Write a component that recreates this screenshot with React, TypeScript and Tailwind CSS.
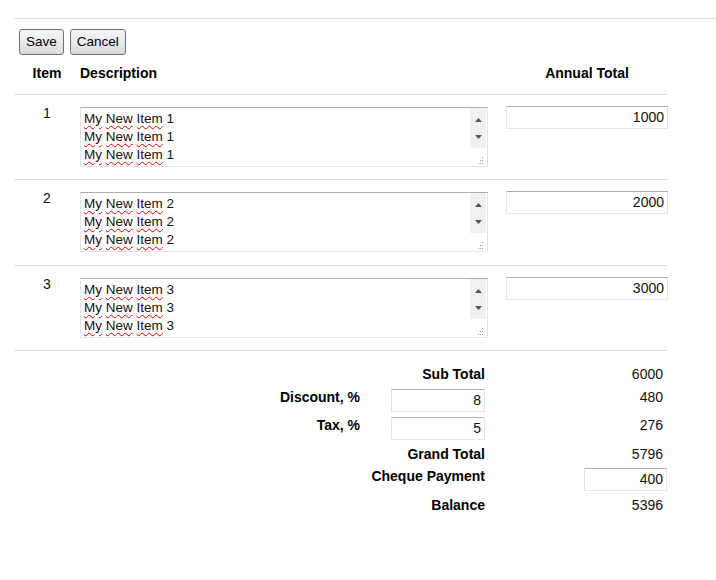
import React from 'react'

const items = [
    { id: 1, total: '1000', pb: 'pb-[12px]' },
    { id: 2, total: '2000', pb: 'pb-[13px]' },
    { id: 3, total: '3000', pb: 'pb-[12px]' },
]

const ieBorder = 'border border-[#e2e3ea] border-t-[#abadb3] border-b-[#e3e9ef]'

function Word({ children }: { children: React.ReactNode }) {
    return (
        <span className="underline decoration-wavy decoration-[#e00000] decoration-1 underline-offset-[2px]">{children}</span>
    )
}

function FakeTextarea({ n }: { n: number }) {
    return (
        <div className={`relative h-[60px] w-[408px] bg-white pl-[3px] pt-[2px] text-[13.5px] leading-[18px] text-[#111] ${ieBorder}`}>
            {[0, 1, 2].map((i) => (
                <div key={i}>
                    <Word>My</Word> <Word>New</Word> <Word>Item</Word> {n}
                </div>
            ))}
            <div className="absolute right-[1px] top-0 flex h-[40px] w-[16px] flex-col items-center justify-around bg-[#f0f0f0] py-[3px]">
                <svg width="7" height="4" viewBox="0 0 7 4">
                    <path d="M0 4 L3.5 0 L7 4 Z" fill="#555" />
                </svg>
                <svg width="7" height="4" viewBox="0 0 7 4">
                    <path d="M0 0 L7 0 L3.5 4 Z" fill="#555" />
                </svg>
            </div>
            <svg className="absolute bottom-[2px] right-[3px]" width="6" height="7" viewBox="0 0 6 7">
                <rect x="4" y="0" width="1" height="1" fill="#999" />
                <rect x="2" y="3" width="1" height="1" fill="#999" />
                <rect x="4" y="3" width="1" height="1" fill="#999" />
                <rect x="0" y="6" width="1" height="1" fill="#999" />
                <rect x="2" y="6" width="1" height="1" fill="#999" />
                <rect x="4" y="6" width="1" height="1" fill="#999" />
            </svg>
        </div>
    )
}

function NumBox({ value, width }: { value: string; width: string }) {
    return (
        <div className={`h-[23px] ${width} bg-white pr-[3px] text-right text-[14px] leading-[21px] text-[#111] ${ieBorder}`}>
            {value}
        </div>
    )
}

function Button({ children }: { children: React.ReactNode }) {
    return (
        <button className="h-[26px] rounded-[3px] border border-[#707070] bg-gradient-to-b from-[#f4f4f4] via-[#ebebeb] to-[#d9d9d9] px-[6px] text-[13.5px] leading-[24px] text-black">
            {children}
        </button>
    )
}

export default function App() {
    return (
        <div className="min-h-screen bg-white pl-[14px] pt-[18px] text-[14px] text-[#111]" style={{ fontFamily: '"Liberation Sans", Arial, sans-serif' }}>
            <div className="border-t border-[#e0e0e0]" />
            <div className="flex gap-[6px] pl-[5px] pt-[10px]">
                <Button>Save</Button>
                <Button>Cancel</Button>
            </div>

            <div className="w-[654px]">
                <div className="flex pb-[13px] pt-[10px] text-[14px] font-bold leading-[16px] text-black">
                    <div className="w-[66px] text-center">Item</div>
                    <div className="w-[426px]">Description</div>
                    <div className="w-[162px] text-center">Annual Total</div>
                </div>

                {items.map((it) => (
                    <div key={it.id} className={`flex border-t border-[#e0e0e0] pt-[12px] ${it.pb}`}>
                        <div className="-mt-[2px] w-[66px] text-center leading-[16px]">{it.id}</div>
                        <FakeTextarea n={it.id} />
                        <div className="ml-[18px] -mt-[1px]">
                            <NumBox value={it.total} width="w-[162px]" />
                        </div>
                    </div>
                ))}

                <div className="border-t border-[#e0e0e0] pt-[15px] leading-[16px]">
                    <div className="flex h-[23px]">
                        <div className="w-[471px] text-right font-bold text-black">Sub Total</div>
                        <div className="w-[183px] pr-[5px] text-right">6000</div>
                    </div>
                    <div className="flex h-[28px]">
                        <div className="w-[346px] text-right font-bold text-black">Discount, %</div>
                        <div className="ml-[31px]">
                            <NumBox value="8" width="w-[94px]" />
                        </div>
                        <div className="w-[183px] pr-[5px] text-right">480</div>
                    </div>
                    <div className="flex h-[29px]">
                        <div className="w-[346px] text-right font-bold text-black">Tax, %</div>
                        <div className="ml-[31px]">
                            <NumBox value="5" width="w-[94px]" />
                        </div>
                        <div className="w-[183px] pr-[5px] text-right">276</div>
                    </div>
                    <div className="flex h-[22px]">
                        <div className="w-[471px] text-right font-bold text-black">Grand Total</div>
                        <div className="w-[183px] pr-[5px] text-right">5796</div>
                    </div>
                    <div className="flex h-[29px]">
                        <div className="w-[471px] text-right font-bold text-black">Cheque Payment</div>
                        <div className="flex w-[182px] justify-end">
                            <NumBox value="400" width="w-[83px]" />
                        </div>
                    </div>
                    <div className="flex h-[22px]">
                        <div className="w-[471px] text-right font-bold text-black">Balance</div>
                        <div className="w-[183px] pr-[5px] text-right">5396</div>
                    </div>
                </div>
            </div>
        </div>
    )
}
